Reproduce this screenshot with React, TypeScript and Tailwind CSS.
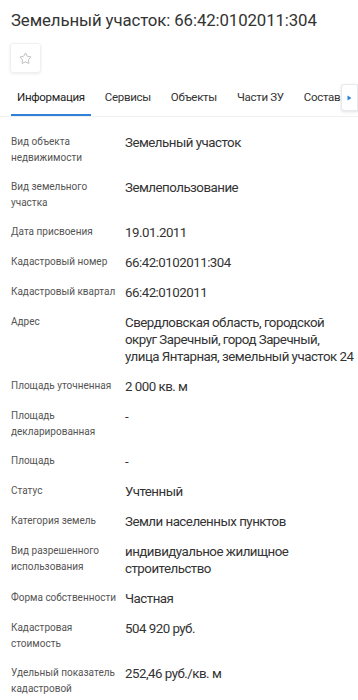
import { Star } from "lucide-react"

const rows: { label: string; value: string[] }[] = [
  { label: "Вид объекта недвижимости", value: ["Земельный участок"] },
  { label: "Вид земельного участка", value: ["Землепользование"] },
  { label: "Дата присвоения", value: ["19.01.2011"] },
  { label: "Кадастровый номер", value: ["66:42:0102011:304"] },
  { label: "Кадастровый квартал", value: ["66:42:0102011"] },
  {
    label: "Адрес",
    value: ["Свердловская область, городской", "округ Заречный, город Заречный,", "улица Янтарная, земельный участок 24"],
  },
  { label: "Площадь уточненная", value: ["2 000 кв. м"] },
  { label: "Площадь декларированная", value: ["-"] },
  { label: "Площадь", value: ["-"] },
  { label: "Статус", value: ["Учтенный"] },
  { label: "Категория земель", value: ["Земли населенных пунктов"] },
  { label: "Вид разрешенного использования", value: ["индивидуальное жилищное", "строительство"] },
  { label: "Форма собственности", value: ["Частная"] },
  { label: "Кадастровая стоимость", value: ["504 920 руб."] },
  { label: "Удельный показатель кадастровой стоимости", value: ["252,46 руб./кв. м"] },
]

const tabs = ["Информация", "Сервисы", "Объекты", "Части ЗУ", "Состав"]

export default function App() {
  return (
    <div className="w-[358px] h-[700px] overflow-hidden bg-white text-[#333] font-['Roboto','Noto_Sans',sans-serif]">
      {/* Header */}
      <h1 className="px-[11px] pt-[9px] text-[16.8px] leading-[22px] font-normal tracking-[-0.1px] text-[#333]">
        Земельный участок: 66:42:0102011:304
      </h1>
      <div className="px-[10px] pt-[12px]">
        <button className="w-[31px] h-[30px] flex items-center justify-center rounded-[3px] border border-[#f0f0f0] shadow-[0_1px_3px_rgba(0,0,0,0.08)]">
          <Star className="w-[13px] h-[13px] text-[#a5a5a5]" strokeWidth={1.3} />
        </button>
      </div>

      {/* Tabs */}
      <div className="relative mt-[13px] border-b border-[#eef0f2]">
        <div className="flex pl-[11px] gap-[8px] whitespace-nowrap">
          {tabs.map((t, i) => (
            <div
              key={t}
              className={`px-[6px] pt-[3px] pb-[8px] text-[11.5px] leading-[17px] tracking-[-0.3px] ${
                i === 0 ? "border-b-2 border-[#2f80d9] text-[#222]" : "border-b-2 border-transparent text-[#333]"
              }`}
            >
              {t}
            </div>
          ))}
        </div>
        <div className="absolute right-0 top-[-2px] w-[17px] h-[27px] bg-white rounded-l-[3px] border border-[#e6e9ee] shadow-[0_1px_3px_rgba(0,0,0,0.12)] flex items-center justify-center">
          <svg width="5" height="6" viewBox="0 0 5 6">
            <path d="M0.5 0.5 L4.5 3 L0.5 5.5 Z" fill="#2f80d9" />
          </svg>
        </div>
      </div>

      {/* Info rows */}
      <div className="pt-[17px] pl-[11px]">
        {rows.map((r) => (
          <div key={r.label} className="flex pb-[13px]">
            <div className="w-[114px] shrink-0 pr-[6px] text-[10px] leading-[16px] text-[#555]">{r.label}</div>
            <div className="flex-1 min-w-0 text-[13.3px] leading-[17px] tracking-[-0.5px] text-[#333]">
              {r.value.map((line) => (
                <div key={line} className="whitespace-nowrap">
                  {line}
                </div>
              ))}
            </div>
          </div>
        ))}
      </div>
    </div>
  )
}
